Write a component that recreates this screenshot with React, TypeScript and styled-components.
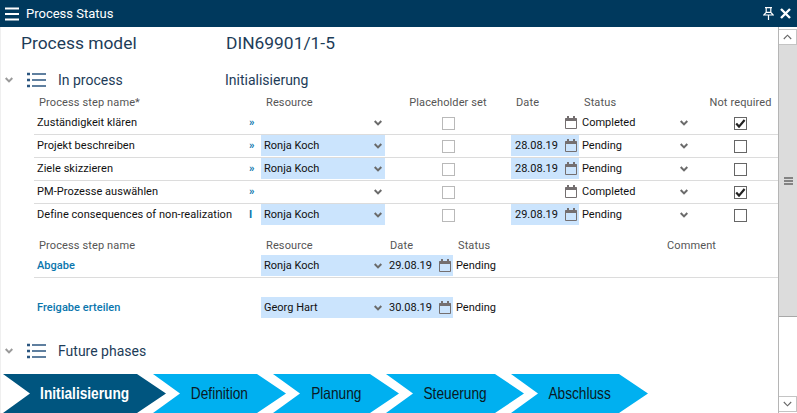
import styled, { createGlobalStyle } from 'styled-components'

const GlobalStyle = createGlobalStyle`
  html, body {
    margin: 0;
    padding: 0;
    background: #fff;
    overflow: hidden;
  }
`

const Window = styled.div`
  width: 797px;
  height: 413px;
  display: flex;
  flex-direction: column;
  overflow: hidden;
  font-family: Roboto, "Liberation Sans", sans-serif;
  font-size: 11px;
  color: #111;
`

const TitleBar = styled.div`
  height: 27px;
  flex: none;
  display: flex;
  align-items: center;
  background: #00395d;
  color: #fff;
  padding: 0 6px 0 5px;
`

const TitleText = styled.div`
  font-size: 13px;
  margin-left: 7px;
  flex: 1;
`

const Body = styled.div`
  flex: 1;
  min-height: 0;
  display: flex;
`

const Main = styled.div`
  width: 778px;
  display: flex;
  flex-direction: column;
  box-shadow: inset 1px 0 0 #efefef;
`

const ModelRow = styled.div`
  height: 32px;
  flex: none;
  display: flex;
  align-items: center;
  padding-left: 21px;
  font-size: 17.4px;
  color: #1d3c58;
`

const ModelLabel = styled.div`
  width: 205px;
`

const SectionHead = styled.div<{ $top: number }>`
  height: 28px;
  flex: none;
  margin-top: ${p => p.$top}px;
  display: flex;
  align-items: center;
  padding-left: 5px;
  font-size: 14px;
  color: #1d3c58;
`

const SectionLabel = styled.div`
  width: 167px;
  margin-left: 12px;
`

const Table = styled.div<{ $top?: number }>`
  margin: ${p => p.$top ?? 0}px 0 0 34px;
`

const activeColumns = '213px 14px 124px 126px 68px 124px 75px'
const milestoneColumns = '227px 124px 68px 214px 111px'

const Head = styled.div<{ $columns: string }>`
  display: grid;
  grid-template-columns: ${p => p.$columns};
  align-items: center;
  height: 16px;
  margin-bottom: 2px;
  color: #555;
  letter-spacing: 0.12px;
`

const HeadCell = styled.div<{ $center?: boolean; $inset?: number }>`
  padding-left: ${p => p.$inset ?? 5}px;
  white-space: nowrap;
  text-align: ${p => (p.$center ? 'center' : 'left')};
`

const Row = styled.div<{ $columns: string; $rule?: boolean }>`
  display: grid;
  grid-template-columns: ${p => p.$columns};
  align-items: stretch;
  height: 21px;
  padding-bottom: 1px;
  border-bottom: 1px solid ${p => (p.$rule ? '#dcdcdc' : 'transparent')};
`

const StepName = styled.div`
  display: flex;
  align-items: center;
  padding-left: 3px;
  white-space: nowrap;
  letter-spacing: 0.05px;
  color: #111;
`

const MilestoneName = styled(StepName)`
  color: #0a76ad;
  font-weight: 500;
`

const Marker = styled.div`
  display: flex;
  align-items: center;
  padding-left: 2px;
  color: #0a76ad;
  font-weight: 700;
`

const Field = styled.div<{ $filled?: boolean }>`
  display: flex;
  align-items: center;
  justify-content: space-between;
  padding: 0 3px 0 3px;
  background: ${p => (p.$filled ? '#cbe4fd' : 'transparent')};
`

const DateField = styled(Field)`
  padding: 0 2px 0 4px;
`

const StatusField = styled(Field)`
  padding: 0 15px 0 3px;
`

const CheckCell = styled.div`
  display: flex;
  align-items: center;
  justify-content: center;
  padding-top: 2px;
`

const Box = styled.div<{ $muted?: boolean }>`
  width: 11px;
  height: 11px;
  border: 1px solid ${p => (p.$muted ? '#b9b9b9' : '#666')};
  display: flex;
  align-items: center;
  justify-content: center;
`

const PlainCell = styled.div`
  display: flex;
  align-items: center;
  padding-left: 3px;
`

const Stepper = styled.div`
  margin-top: auto;
  height: 39px;
  flex: none;
  display: flex;
  padding-left: 3px;
`

const Step = styled.div<{ $width: number; $active?: boolean }>`
  width: ${p => p.$width}px;
  flex: none;
  display: flex;
  align-items: center;
  justify-content: center;
  background: ${p => (p.$active ? '#00557f' : '#00b0f0')};
  color: ${p => (p.$active ? '#fff' : '#0a1a24')};
  font-family: "Liberation Sans", Arial, sans-serif;
  font-size: 16.5px;
  font-weight: ${p => (p.$active ? 700 : 400)};
  clip-path: polygon(0 0, calc(100% - 29px) 0, 100% 50%, calc(100% - 29px) 100%, 0 100%, 27px 50%);

  & + & {
    margin-left: -13px;
  }
`

const StepLabel = styled.span`
  display: inline-block;
  transform: scaleX(0.83);
  white-space: nowrap;
`

const Scrollbar = styled.div`
  width: 19px;
  flex: none;
  display: flex;
  flex-direction: column;
  box-sizing: border-box;
  border-left: 1px solid #b5b5b5;
  padding-top: 2px;
`

const ScrollButton = styled.div`
  height: 16px;
  flex: none;
  display: flex;
  align-items: center;
  justify-content: center;
  box-sizing: border-box;
  border: 1px solid #c4c4c4;
  border-left: none;
  background: #fff;
`

const ScrollThumb = styled.div`
  height: 272px;
  flex: none;
  display: flex;
  align-items: center;
  justify-content: center;
  box-sizing: border-box;
  background: #dcdcdc;
  border-bottom: 1px solid #a8a8a8;
`

const ScrollTrack = styled.div`
  flex: 1;
`

const ScrollEnd = styled(ScrollButton)`
  margin-bottom: 1px;
`

const Hamburger = () => (
  <svg width="14" height="14" viewBox="0 0 14 14">
    <path d="M0 1.5h14M0 7h14M0 12.5h14" stroke="#fff" strokeWidth="2" />
  </svg>
)

const Pin = () => (
  <svg width="11" height="13" viewBox="0 0 11 13" style={{ marginRight: 6 }}>
    <path d="M2 .7h7M3.2 .7v4.6M7.8 .7v4.6M.8 8h9.4L7.8 5.3H3.2zM5.5 8v5" stroke="#fff" strokeWidth="1.2" fill="none" />
  </svg>
)

const Close = () => (
  <svg width="11" height="11" viewBox="0 0 11 11">
    <path d="M1 1l9 9M10 1l-9 9" stroke="#fff" strokeWidth="2.4" />
  </svg>
)

const ListIcon = () => (
  <svg width="19" height="16" viewBox="0 0 19 16" style={{ marginLeft: 14 }}>
    <path d="M0 2h3M0 8h3M0 14h3" stroke="#2b5680" strokeWidth="2.4" />
    <path d="M5 2H19M5 8H19M5 14H19" stroke="#2b5680" strokeWidth="1.6" />
  </svg>
)

const Chevron = ({ color = '#6a6a6a' }: { color?: string }) => (
  <svg width="8" height="6" viewBox="0 0 8 6">
    <path d="M.7 1l3.3 3.4L7.3 1" stroke={color} strokeWidth="2" fill="none" />
  </svg>
)

const CalendarIcon = () => (
  <svg width="12" height="13" viewBox="0 0 12 13">
    <path d="M.5 2.5h11v10H.5z" fill="none" stroke="#746f70" />
    <path d="M0 2.5h12V5H0z" fill="#746f70" />
    <path d="M3 0v3M9 0v3" stroke="#746f70" strokeWidth="2" />
  </svg>
)

const CheckMark = () => (
  <svg width="11" height="9" viewBox="0 0 11 9">
    <path d="M1.2 4.6l2.8 3 5.6-6.6" stroke="#222" strokeWidth="2.2" fill="none" />
  </svg>
)

const steps = [
  { name: 'Zuständigkeit klären', marker: '»', resource: '', date: '', status: 'Completed', done: true },
  { name: 'Projekt beschreiben', marker: '»', resource: 'Ronja Koch', date: '28.08.19', status: 'Pending', done: false },
  { name: 'Ziele skizzieren', marker: '»', resource: 'Ronja Koch', date: '28.08.19', status: 'Pending', done: false },
  { name: 'PM-Prozesse auswählen', marker: '»', resource: '', date: '', status: 'Completed', done: true },
  { name: 'Define consequences of non-realization', marker: 'I', resource: 'Ronja Koch', date: '29.08.19', status: 'Pending', done: false }
]

const phases = [
  { name: 'Initialisierung', width: 163, active: true },
  { name: 'Definition', width: 133 },
  { name: 'Planung', width: 126 },
  { name: 'Steuerung', width: 138 },
  { name: 'Abschluss', width: 137 }
]

export default function App() {
  return (
    <Window>
      <GlobalStyle />
      <TitleBar>
        <Hamburger />
        <TitleText>Process Status</TitleText>
        <Pin />
        <Close />
      </TitleBar>
      <Body>
        <Main>
          <ModelRow>
            <ModelLabel>Process model</ModelLabel>
            <div>DIN69901/1-5</div>
          </ModelRow>
          <SectionHead $top={7}>
            <Chevron color="#9a9a9a" />
            <ListIcon />
            <SectionLabel>In process</SectionLabel>
            <div>Initialisierung</div>
          </SectionHead>
          <Table>
            <Head $columns={activeColumns}>
              <HeadCell>Process step name*</HeadCell>
              <div />
              <HeadCell>Resource</HeadCell>
              <HeadCell $center $inset={0}>Placeholder set</HeadCell>
              <HeadCell>Date</HeadCell>
              <HeadCell>Status</HeadCell>
              <HeadCell $center $inset={0}>Not required</HeadCell>
            </Head>
            {steps.map((step, i) => (
              <Row key={step.name} $columns={activeColumns} $rule={i < steps.length - 1}>
                <StepName>{step.name}</StepName>
                <Marker>{step.marker}</Marker>
                <Field $filled={!!step.resource}>
                  <span>{step.resource}</span>
                  <Chevron />
                </Field>
                <CheckCell>
                  <Box $muted />
                </CheckCell>
                <DateField $filled={!!step.date}>
                  <span>{step.date}</span>
                  <CalendarIcon />
                </DateField>
                <StatusField>
                  <span>{step.status}</span>
                  <Chevron />
                </StatusField>
                <CheckCell>
                  <Box>{step.done && <CheckMark />}</Box>
                </CheckCell>
              </Row>
            ))}
          </Table>
          <Table $top={10}>
            <Head $columns={milestoneColumns}>
              <HeadCell>Process step name</HeadCell>
              <HeadCell>Resource</HeadCell>
              <HeadCell>Date</HeadCell>
              <HeadCell>Status</HeadCell>
              <HeadCell $inset={0}>Comment</HeadCell>
            </Head>
            <Row $columns={milestoneColumns} $rule>
              <MilestoneName>Abgabe</MilestoneName>
              <Field $filled>
                <span>Ronja Koch</span>
                <Chevron />
              </Field>
              <DateField $filled>
                <span>29.08.19</span>
                <CalendarIcon />
              </DateField>
              <PlainCell>Pending</PlainCell>
            </Row>
          </Table>
          <Table $top={19}>
            <Row $columns={milestoneColumns}>
              <MilestoneName>Freigabe erteilen</MilestoneName>
              <Field $filled>
                <span>Georg Hart</span>
                <Chevron />
              </Field>
              <DateField $filled>
                <span>30.08.19</span>
                <CalendarIcon />
              </DateField>
              <PlainCell>Pending</PlainCell>
            </Row>
          </Table>
          <SectionHead $top={17}>
            <Chevron color="#9a9a9a" />
            <ListIcon />
            <SectionLabel>Future phases</SectionLabel>
          </SectionHead>
          <Stepper>
            {phases.map(phase => (
              <Step key={phase.name} $width={phase.width} $active={phase.active}>
                <StepLabel>{phase.name}</StepLabel>
              </Step>
            ))}
          </Stepper>
        </Main>
        <Scrollbar>
          <ScrollButton>
            <svg width="9" height="6" viewBox="0 0 9 6">
              <path d="M.8 5l3.7-3.8L8.2 5" stroke="#666" strokeWidth="1.1" fill="none" />
            </svg>
          </ScrollButton>
          <ScrollThumb>
            <svg width="9" height="8" viewBox="0 0 9 8">
              <path d="M0 1h9M0 4h9M0 7h9" stroke="#666" strokeWidth="1.5" />
            </svg>
          </ScrollThumb>
          <ScrollTrack />
          <ScrollEnd>
            <svg width="9" height="6" viewBox="0 0 9 6">
              <path d="M.8 1l3.7 3.8L8.2 1" stroke="#666" strokeWidth="1.1" fill="none" />
            </svg>
          </ScrollEnd>
        </Scrollbar>
      </Body>
    </Window>
  )
}
